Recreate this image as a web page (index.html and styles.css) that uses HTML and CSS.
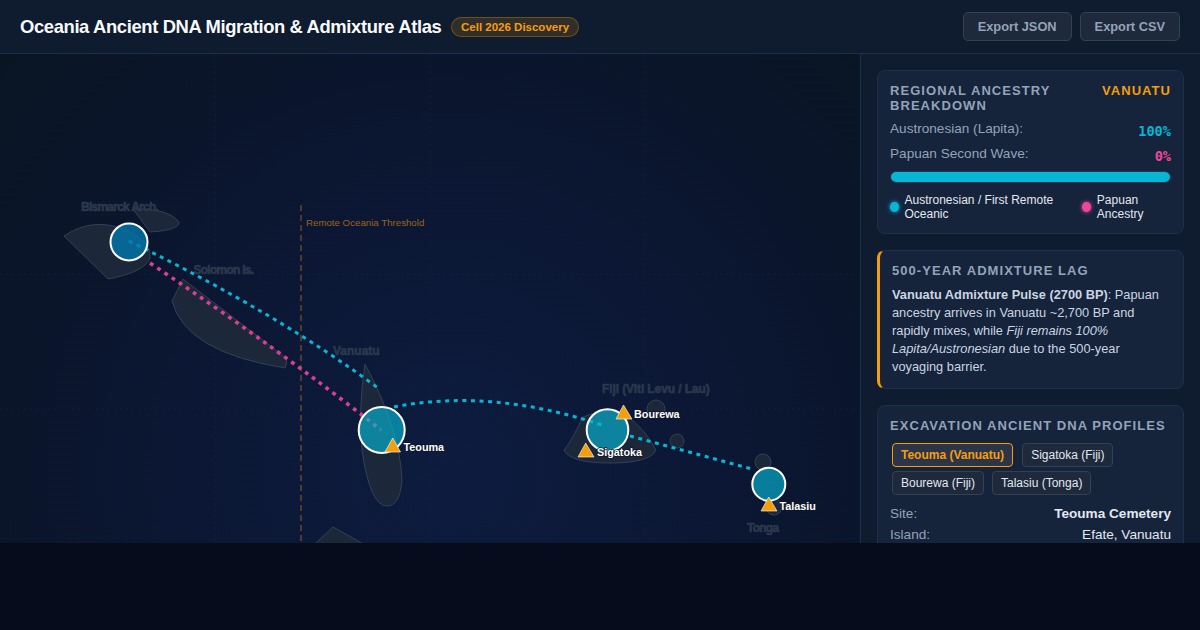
FILE: index.html
```html
<!DOCTYPE html>
<html lang="en">
<head>
    <meta charset="UTF-8">
    <meta name="viewport" content="width=device-width, initial-scale=1.0">
    <title>Oceania Ancient DNA Atlas</title>
    <link rel="stylesheet" href="styles.css">
</head>
<body>
    <div class="app">
        <header class="topbar">
            <div class="brand">
                <h1>Oceania Ancient DNA Migration &amp; Admixture Atlas</h1>
                <span class="badge">Cell 2026 Discovery</span>
            </div>
            <div class="actions">
                <button class="btn">Export JSON</button>
                <button class="btn">Export CSV</button>
            </div>
        </header>

        <main class="workspace">
            <div class="map">
                <svg class="map-svg" viewBox="0 54 860 489" width="860" height="489">
                    <defs>
                        <pattern id="fine" width="4" height="4" patternUnits="userSpaceOnUse">
                            <path d="M4 0H0V4" fill="none" stroke="#000" stroke-opacity="0.07"/>
                        </pattern>
                        <radialGradient id="sea" gradientUnits="userSpaceOnUse" cx="450" cy="470" r="600">
                            <stop offset="0" stop-color="#0d1c40"/>
                            <stop offset="0.5" stop-color="#0b1733"/>
                            <stop offset="1" stop-color="#0a1524"/>
                        </radialGradient>
                    </defs>
                    <rect x="0" y="54" width="860" height="489" fill="url(#sea)"/>
                    <rect x="0" y="54" width="860" height="489" fill="url(#fine)"/>

                    <g class="graticule">
                        <path d="M215 54V543M430 54V543M645 54V543M0 274H860M0 409H860"/>
                    </g>

                    <g class="land">
                        <path d="M64 236Q95 215 130 232Q152 243 150 258Q145 272 108 279Z"/>
                        <path d="M133 209Q168 208 179 222Q180 230 150 232Z"/>
                        <path d="M183 279L172 301Q185 352 285 368Q288 362 286 358Z"/>
                        <path d="M365 364Q400 430 402 480Q400 506 387 506Q370 506 362 450Q358 410 365 364Z"/>
                        <path d="M333 527L317 542L300 560H380L360 542Z"/>
                        <path d="M564 450Q570 444 583 417Q610 405 625 415Q645 428 656 450Q650 463 610 463Q570 463 564 450Z"/>
                        <circle cx="656" cy="409" r="9"/>
                        <circle cx="677" cy="441" r="7"/>
                        <circle cx="763" cy="462" r="8"/>
                        <circle cx="774" cy="507" r="8"/>
                    </g>

                    <path class="threshold" d="M301 205V543"/>
                    <text class="threshold-label" x="306" y="226">Remote Oceania Threshold</text>

                    <text class="area area-tight" x="81" y="210.5">Bismarck Arch.</text>
                    <text class="area area-tight" x="193.5" y="274">Solomon Is.</text>
                    <text class="area" x="333" y="355">Vanuatu</text>
                    <text class="area area-fiji" x="602" y="393">Fiji (Viti Levu / Lau)</text>
                    <text class="area area-tight" x="747" y="532">Tonga</text>

                    <path class="route route-pink" d="M150 263Q280 350 381 430"/>
                    <path class="route route-cyan" d="M129 241Q280 315 378 388"/>
                    <path class="route route-cyan" d="M394 407Q490 388 602 425"/>
                    <path class="route route-cyan" d="M630 436L752 469"/>

                    <circle class="pie pie-blue" cx="129" cy="242" r="18.5"/>
                    <circle class="pie" cx="381.7" cy="430" r="23"/>
                    <circle class="pie" cx="607.5" cy="430" r="20.8"/>
                    <circle class="pie" cx="768.8" cy="484.2" r="16.5"/>

                    <polygon class="site" points="392.7,438 385,452 400.5,452"/>
                    <polygon class="site" points="585.7,443 578,457 594,457"/>
                    <polygon class="site" points="623.5,405 616,419 632,419"/>
                    <polygon class="site" points="768.7,497 761,511 777,511"/>

                    <text class="site-label" x="403.5" y="451">Teouma</text>
                    <text class="site-label" x="597" y="456">Sigatoka</text>
                    <text class="site-label" x="634" y="418">Bourewa</text>
                    <text class="site-label" x="779.5" y="510">Talasiu</text>
                </svg>
            </div>

            <aside class="sidebar">
                <section class="card">
                    <div class="card-head">
                        <h2>Regional Ancestry Breakdown</h2>
                        <span class="region">Vanuatu</span>
                    </div>
                    <div class="stat">
                        <span>Austronesian (Lapita):</span>
                        <span class="pct pct-cyan">100%</span>
                    </div>
                    <div class="stat">
                        <span>Papuan Second Wave:</span>
                        <span class="pct pct-pink">0%</span>
                    </div>
                    <div class="bar"><div class="bar-fill" style="width: 100%"></div></div>
                    <div class="legend">
                        <div class="legend-item"><i class="dot dot-cyan"></i><span>Austronesian / First Remote Oceanic</span></div>
                        <div class="legend-item"><i class="dot dot-pink"></i><span>Papuan Ancestry</span></div>
                    </div>
                </section>

                <section class="card card-lag">
                    <h2>500-Year Admixture Lag</h2>
                    <p><strong>Vanuatu Admixture Pulse (2700 BP)</strong>: Papuan ancestry arrives in Vanuatu ~2,700 BP and rapidly mixes, while <em>Fiji remains 100% Lapita/Austronesian</em> due to the 500-year voyaging barrier.</p>
                </section>

                <section class="card">
                    <h2>Excavation Ancient DNA Profiles</h2>
                    <div class="chips">
                        <button class="chip active">Teouma (Vanuatu)</button>
                        <button class="chip">Sigatoka (Fiji)</button>
                        <button class="chip">Bourewa (Fiji)</button>
                        <button class="chip">Talasiu (Tonga)</button>
                    </div>
                    <div class="info"><span>Site:</span><strong>Teouma Cemetery</strong></div>
                    <div class="info"><span>Island:</span><b>Efate, Vanuatu</b></div>
                </section>
            </aside>
        </main>
    </div>
</body>
</html>
```

FILE: styles.css
```css
* {
    box-sizing: border-box;
}
body {
    margin: 0;
    background: #060c1b;
    font-family: "Liberation Sans", Arial, sans-serif;
    color: #e2e8f0;
}
.app {
    height: 543px;
    display: flex;
    flex-direction: column;
    overflow: hidden;
}

/* Header */
.topbar {
    height: 54px;
    flex: none;
    display: flex;
    justify-content: space-between;
    align-items: center;
    padding: 0 20px;
    background: #0f1b2f;
    border-bottom: 1px solid #1e2f4d;
}
.brand {
    display: flex;
    align-items: center;
    gap: 10px;
}
.topbar h1 {
    margin: 0;
    font-size: 18.4px;
    font-weight: 700;
    letter-spacing: -0.02em;
    color: #f8fafc;
}
.badge {
    padding: 3px 8.6px;
    font-size: 11.5px;
    font-weight: 700;
    color: #f59e0b;
    background: rgba(245, 158, 11, 0.15);
    border: 1px solid rgba(245, 158, 11, 0.3);
    border-radius: 10px;
}
.actions {
    display: flex;
    gap: 8px;
}
.btn {
    height: 29px;
    padding: 0 14px;
    font-family: inherit;
    font-size: 12.8px;
    font-weight: 700;
    color: #94a3b8;
    background: #1e293b;
    border: 1px solid #334155;
    border-radius: 5px;
}

/* Main */
.workspace {
    flex: 1;
    min-height: 0;
    display: flex;
}
.map {
    width: 860px;
    flex: none;
}
.map-svg {
    display: block;
}
.graticule path {
    fill: none;
    stroke: #1e2f4d;
    stroke-opacity: 0.35;
    stroke-dasharray: 2 4;
}
.land path,
.land circle {
    fill: #1e293b;
    fill-opacity: 0.9;
    stroke: #334155;
    stroke-width: 1;
}
.threshold {
    fill: none;
    stroke: #f59e0b;
    stroke-opacity: 0.28;
    stroke-width: 2;
    stroke-dasharray: 6 4;
}
.threshold-label {
    font-size: 9.7px;
    fill: #f59e0b;
    fill-opacity: 0.6;
}
.area {
    font-size: 12px;
    font-weight: 700;
    fill: #2b384d;
    stroke: #2b384d;
    stroke-width: 0.6;
}
.area-tight {
    letter-spacing: -0.75px;
}
.area-fiji {
    letter-spacing: -0.1px;
}
.route {
    fill: none;
}
.route-cyan {
    stroke: #06b6d4;
    stroke-width: 3;
    stroke-dasharray: 4 4.6;
}
.route-pink {
    stroke: #db3f92;
    stroke-width: 3.6;
    stroke-dasharray: 3.8 4.8;
}
.pie {
    fill: #06b6d4;
    fill-opacity: 0.65;
    stroke: #fff;
    stroke-width: 2;
}
.pie-blue {
    fill: #0477ad;
    fill-opacity: 0.8;
}
.site {
    fill: #f59e0b;
    stroke: #fff;
    stroke-opacity: 0.6;
    stroke-width: 1;
}
.site-label {
    font-size: 10.8px;
    font-weight: 700;
    fill: #fff;
    paint-order: stroke;
    stroke: #0f172a;
    stroke-width: 1.5px;
}

/* Sidebar */
.sidebar {
    width: 340px;
    flex: none;
    padding: 16px;
    background: #0f1b2f;
    border-left: 1px solid #1e2f4d;
    display: flex;
    flex-direction: column;
    gap: 16px;
    overflow: hidden;
}
.card {
    flex: none;
    padding: 12px;
    background: #15233b;
    border: 1px solid #1e2f4d;
    border-radius: 8px;
}
.card h2 {
    margin: 0;
    font-size: 13px;
    line-height: 15px;
    font-weight: 700;
    letter-spacing: 1.05px;
    text-transform: uppercase;
    color: #94a3b8;
}
.card-head {
    display: flex;
    justify-content: space-between;
    gap: 30px;
    margin-bottom: 8px;
}
.region {
    font-size: 13px;
    line-height: 15px;
    font-weight: 700;
    letter-spacing: 1.05px;
    text-transform: uppercase;
    color: #f59e0b;
}
.stat {
    display: flex;
    justify-content: space-between;
    height: 25px;
    font-size: 13.6px;
    color: #94a3b8;
}
.pct {
    margin-top: 2px;
    font-family: "DejaVu Sans Mono", monospace;
    font-size: 13.6px;
    font-weight: 700;
}
.pct-cyan {
    color: #06b6d4;
}
.pct-pink {
    color: #ec4899;
}
.bar {
    height: 12px;
    background: #1e293b;
    border: 1px solid #1e3a52;
    border-radius: 6px;
    overflow: hidden;
}
.bar-fill {
    height: 100%;
    background: #06b6d4;
}
.legend {
    display: flex;
    gap: 15px;
    margin-top: 10px;
    font-size: 12px;
    line-height: 14px;
    color: #e2e8f0;
}
.legend-item {
    display: flex;
    align-items: center;
    gap: 6px;
}
.dot {
    width: 8.5px;
    height: 10px;
    flex: none;
    border-radius: 50%;
}
.dot-cyan {
    background: #06b6d4;
    box-shadow: 0 0 4px #06b6d4;
}
.dot-pink {
    background: #ec4899;
    box-shadow: 0 0 4px #ec4899;
}
.card-lag {
    border-left: 3px solid #f59e0b;
}
.card-lag p {
    margin: 8px 0 0 0;
    font-size: 12.8px;
    line-height: 18px;
    color: #cbd5e1;
}
.chips {
    display: flex;
    flex-wrap: wrap;
    gap: 4px 8px;
    margin: 10px 0 8px 2px;
}
.chip {
    height: 24px;
    padding: 0 8px;
    font-family: inherit;
    font-size: 12px;
    color: #e2e8f0;
    background: #1e293b;
    border: 1px solid #334155;
    border-radius: 4px;
}
.chip.active {
    margin-right: 1px;
    font-weight: 700;
    color: #f59e0b;
    background: #2b3547;
    border-color: #f59e0b;
}
.info {
    display: flex;
    justify-content: space-between;
    height: 21px;
    font-size: 13.6px;
    line-height: 21px;
    color: #94a3b8;
}
.info strong,
.info b {
    color: #e2e8f0;
    font-weight: 400;
}
.info strong {
    font-weight: 700;
}
```
